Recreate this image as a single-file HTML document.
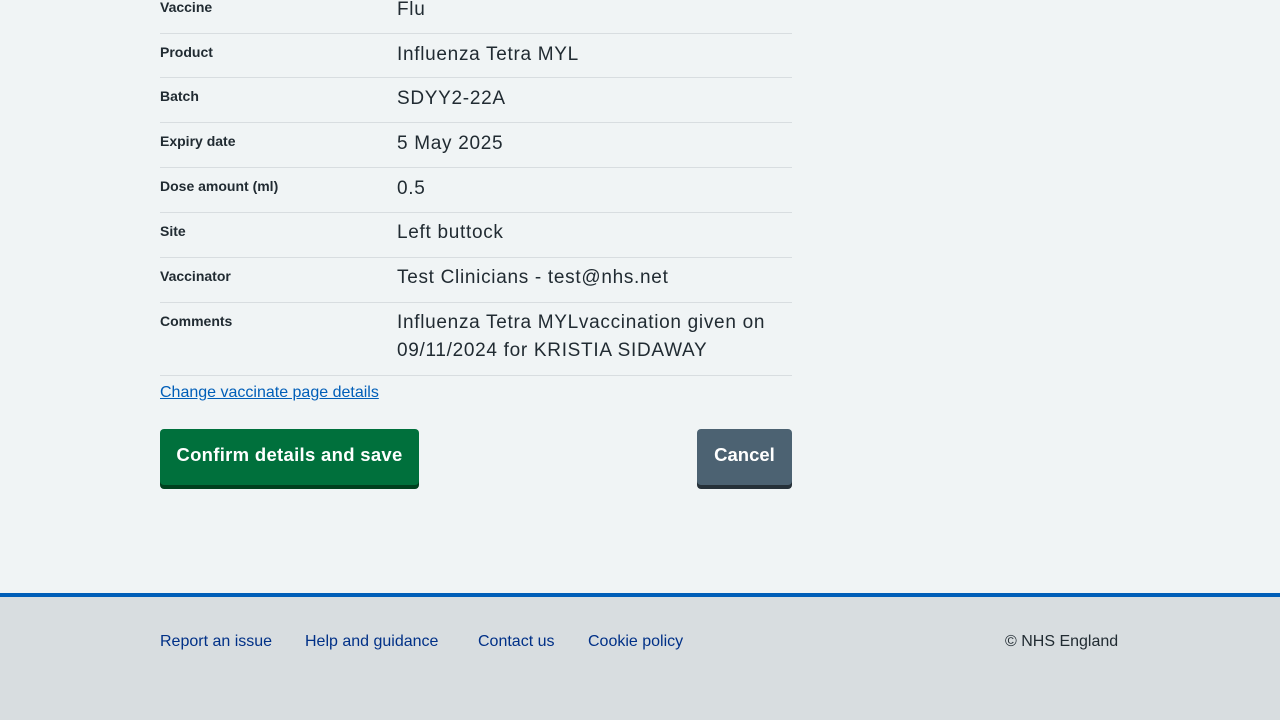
<!DOCTYPE html>
<html><head><meta charset="utf-8"><style>
*{margin:0;padding:0;box-sizing:border-box}
body{width:1280px;height:720px;background:#f0f4f5;font-family:"Liberation Sans",sans-serif;color:#212b32;position:relative;overflow:hidden}
.row{position:absolute;left:160px;width:632px;border-bottom:1px solid #d8dde0}
.l{position:absolute;left:0;font-size:14px;font-weight:bold;margin-top:1px}
.v{position:absolute;left:237px;font-size:19px;letter-spacing:0.7px;line-height:28px;width:395px;margin-top:1px}
a{color:#005eb8}
.btn{position:absolute;top:429px;height:56px;border-radius:4px;color:#fff;font-weight:bold;font-size:18.5px;line-height:52px;text-align:center}
.foot{position:absolute;left:0;top:593px;width:1280px;height:127px;background:#d8dde0;border-top:4px solid #005eb8}
.fl{position:absolute;top:36px;font-size:16px;color:#003087}
</style></head><body>
<div class="row" style="top:-12px;height:46px"><div class="l" style="top:10px">Vaccine</div><div class="v" style="top:7px">Flu</div></div>
<div class="row" style="top:34px;height:44px"><div class="l" style="top:9px">Product</div><div class="v" style="top:6px">Influenza Tetra MYL</div></div>
<div class="row" style="top:78px;height:45px"><div class="l" style="top:9px">Batch</div><div class="v" style="top:6px">SDYY2-22A</div></div>
<div class="row" style="top:123px;height:45px"><div class="l" style="top:9px">Expiry date</div><div class="v" style="top:6px">5 May 2025</div></div>
<div class="row" style="top:168px;height:45px"><div class="l" style="top:9px">Dose amount (ml)</div><div class="v" style="top:6px">0.5</div></div>
<div class="row" style="top:213px;height:45px"><div class="l" style="top:9px">Site</div><div class="v" style="top:5px">Left buttock</div></div>
<div class="row" style="top:258px;height:45px"><div class="l" style="top:9px">Vaccinator</div><div class="v" style="top:5px">Test Clinicians - test@nhs.net</div></div>
<div class="row" style="top:303px;height:73px"><div class="l" style="top:9px">Comments</div><div class="v" style="top:5px">Influenza Tetra MYLvaccination given on 09/11/2024 for KRISTIA SIDAWAY</div></div>
<a href="#" style="position:absolute;left:160px;top:384px;font-size:16px">Change vaccinate page details</a>
<div class="btn" style="left:160px;width:259px;background:#00703c;box-shadow:0 4px 0 #00401e;letter-spacing:0.3px">Confirm details and save</div>
<div class="btn" style="left:697px;width:95px;background:#4c6272;box-shadow:0 4px 0 #263139">Cancel</div>
<div class="foot">
<span class="fl" style="left:160px">Report an issue</span>
<span class="fl" style="left:305px">Help and guidance</span>
<span class="fl" style="left:478px">Contact us</span>
<span class="fl" style="left:588px">Cookie policy</span>
<span class="fl" style="left:1005px;color:#212b32">© NHS England</span>
</div>
</body></html>
